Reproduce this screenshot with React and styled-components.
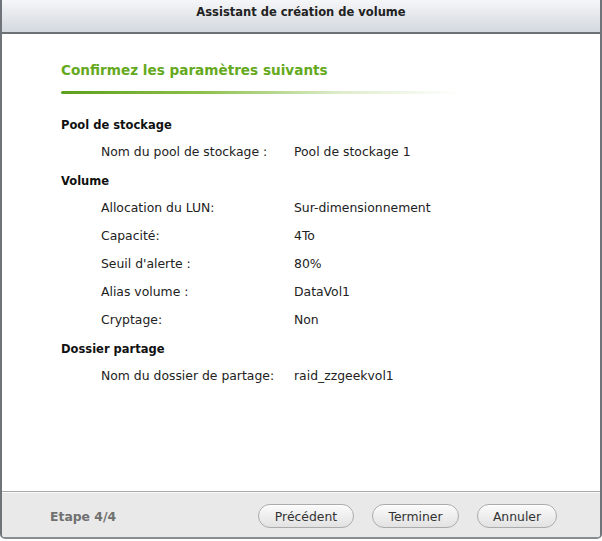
import React from 'react'
import styled, { createGlobalStyle } from 'styled-components'

const Global = createGlobalStyle`
  html, body { margin:0; padding:0; background:#fff; }
  body { font-family: "DejaVu Sans", Verdana, sans-serif; }
`

const Window = styled.div`
  width:602px;
  height:539px;
  box-sizing:border-box;
  border-left:2px solid #6f747a;
  border-right:2px solid #6f747a;
  border-bottom:2px solid #8a8d90;
  border-radius:0 0 5px 5px;
  display:flex;
  flex-direction:column;
  overflow:hidden;
`

const Header = styled.div`
  height:34px;
  flex:none;
  background:linear-gradient(#f5f6f8, #d3d9df);
  border-bottom:2px solid #6c7176;
  display:flex;
  align-items:center;
  justify-content:center;
  font-size:11.5px;
  font-weight:bold;
  color:#222;
  padding-bottom:9px;
  box-sizing:border-box;
`

const Body = styled.div`
  flex:1;
  background:#fff;
  padding:27px 0 0 59px;
`

const Title = styled.h1`
  margin:0;
  font-size:13.6px;
  font-weight:bold;
  color:#64a920;
  line-height:18px;
`

const GreenRule = styled.div`
  margin-top:12px;
  width:400px;
  height:3px;
  background:linear-gradient(90deg, #5e9f1c 0%, #8cc04a 35%, rgba(200,225,170,0.6) 70%, rgba(255,255,255,0) 100%);
  border-radius:2px;
`

const Sections = styled.div`
  margin-top:23px;
  display:flex;
  flex-direction:column;
`

const Section = styled.h2`
  margin:0;
  font-size:11.5px;
  font-weight:bold;
  color:#111;
  line-height:16px;
  margin-top:${p => (p.first ? '0' : '13px')};
`

const Row = styled.div`
  display:grid;
  grid-template-columns:193px 1fr;
  padding-left:40px;
  font-size:12.4px;
  color:#222;
  line-height:16px;
  margin-top:${p => (p.tight ? '11px' : '12px')};
`

const Footer = styled.div`
  height:46px;
  flex:none;
  background:#e9e9e9;
  border-top:1px solid #a9a9a9;
  box-shadow:inset 0 1px 0 #fafafa;
  display:flex;
  align-items:center;
  padding:3px 43px 0 48px;
  box-sizing:border-box;
`

const Step = styled.span`
  font-size:12.4px;
  font-weight:bold;
  color:#707070;
  flex:1;
`

const Buttons = styled.div`
  display:flex;
  gap:18px;
`

const Button = styled.button`
  height:24px;
  width:${p => p.w}px;
  border:1px solid #ababab;
  border-radius:12px;
  background:linear-gradient(#fbfbfb, #e2e2e2);
  box-shadow:inset 0 1px 0 #fff;
  font-family:"DejaVu Sans", Verdana, sans-serif;
  font-size:12.4px;
  color:#333;
  padding:0;
`

const data = [
  { title: 'Pool de stockage', rows: [['Nom du pool de stockage :', 'Pool de stockage 1']] },
  {
    title: 'Volume',
    rows: [
      ['Allocation du LUN:', 'Sur-dimensionnement'],
      ['Capacité:', '4To'],
      ["Seuil d'alerte :", '80%'],
      ['Alias volume :', 'DataVol1'],
      ['Cryptage:', 'Non'],
    ],
  },
  { title: 'Dossier partage', rows: [['Nom du dossier de partage:', 'raid_zzgeekvol1']] },
]

const App = () => (
  <>
    <Global />
    <Window>
      <Header>Assistant de création de volume</Header>
      <Body>
        <Title>Confirmez les paramètres suivants</Title>
        <GreenRule />
        <Sections>
          {data.map((s, i) => (
            <React.Fragment key={s.title}>
              <Section first={i === 0}>{s.title}</Section>
              {s.rows.map((r, j) => (
                <Row key={r[0]} tight={j === 0}>
                  <span>{r[0]}</span>
                  <span>{r[1]}</span>
                </Row>
              ))}
            </React.Fragment>
          ))}
        </Sections>
      </Body>
      <Footer>
        <Step>Etape 4/4</Step>
        <Buttons>
          <Button w={96}>Précédent</Button>
          <Button w={87}>Terminer</Button>
          <Button w={80}>Annuler</Button>
        </Buttons>
      </Footer>
    </Window>
  </>
)

export default App
